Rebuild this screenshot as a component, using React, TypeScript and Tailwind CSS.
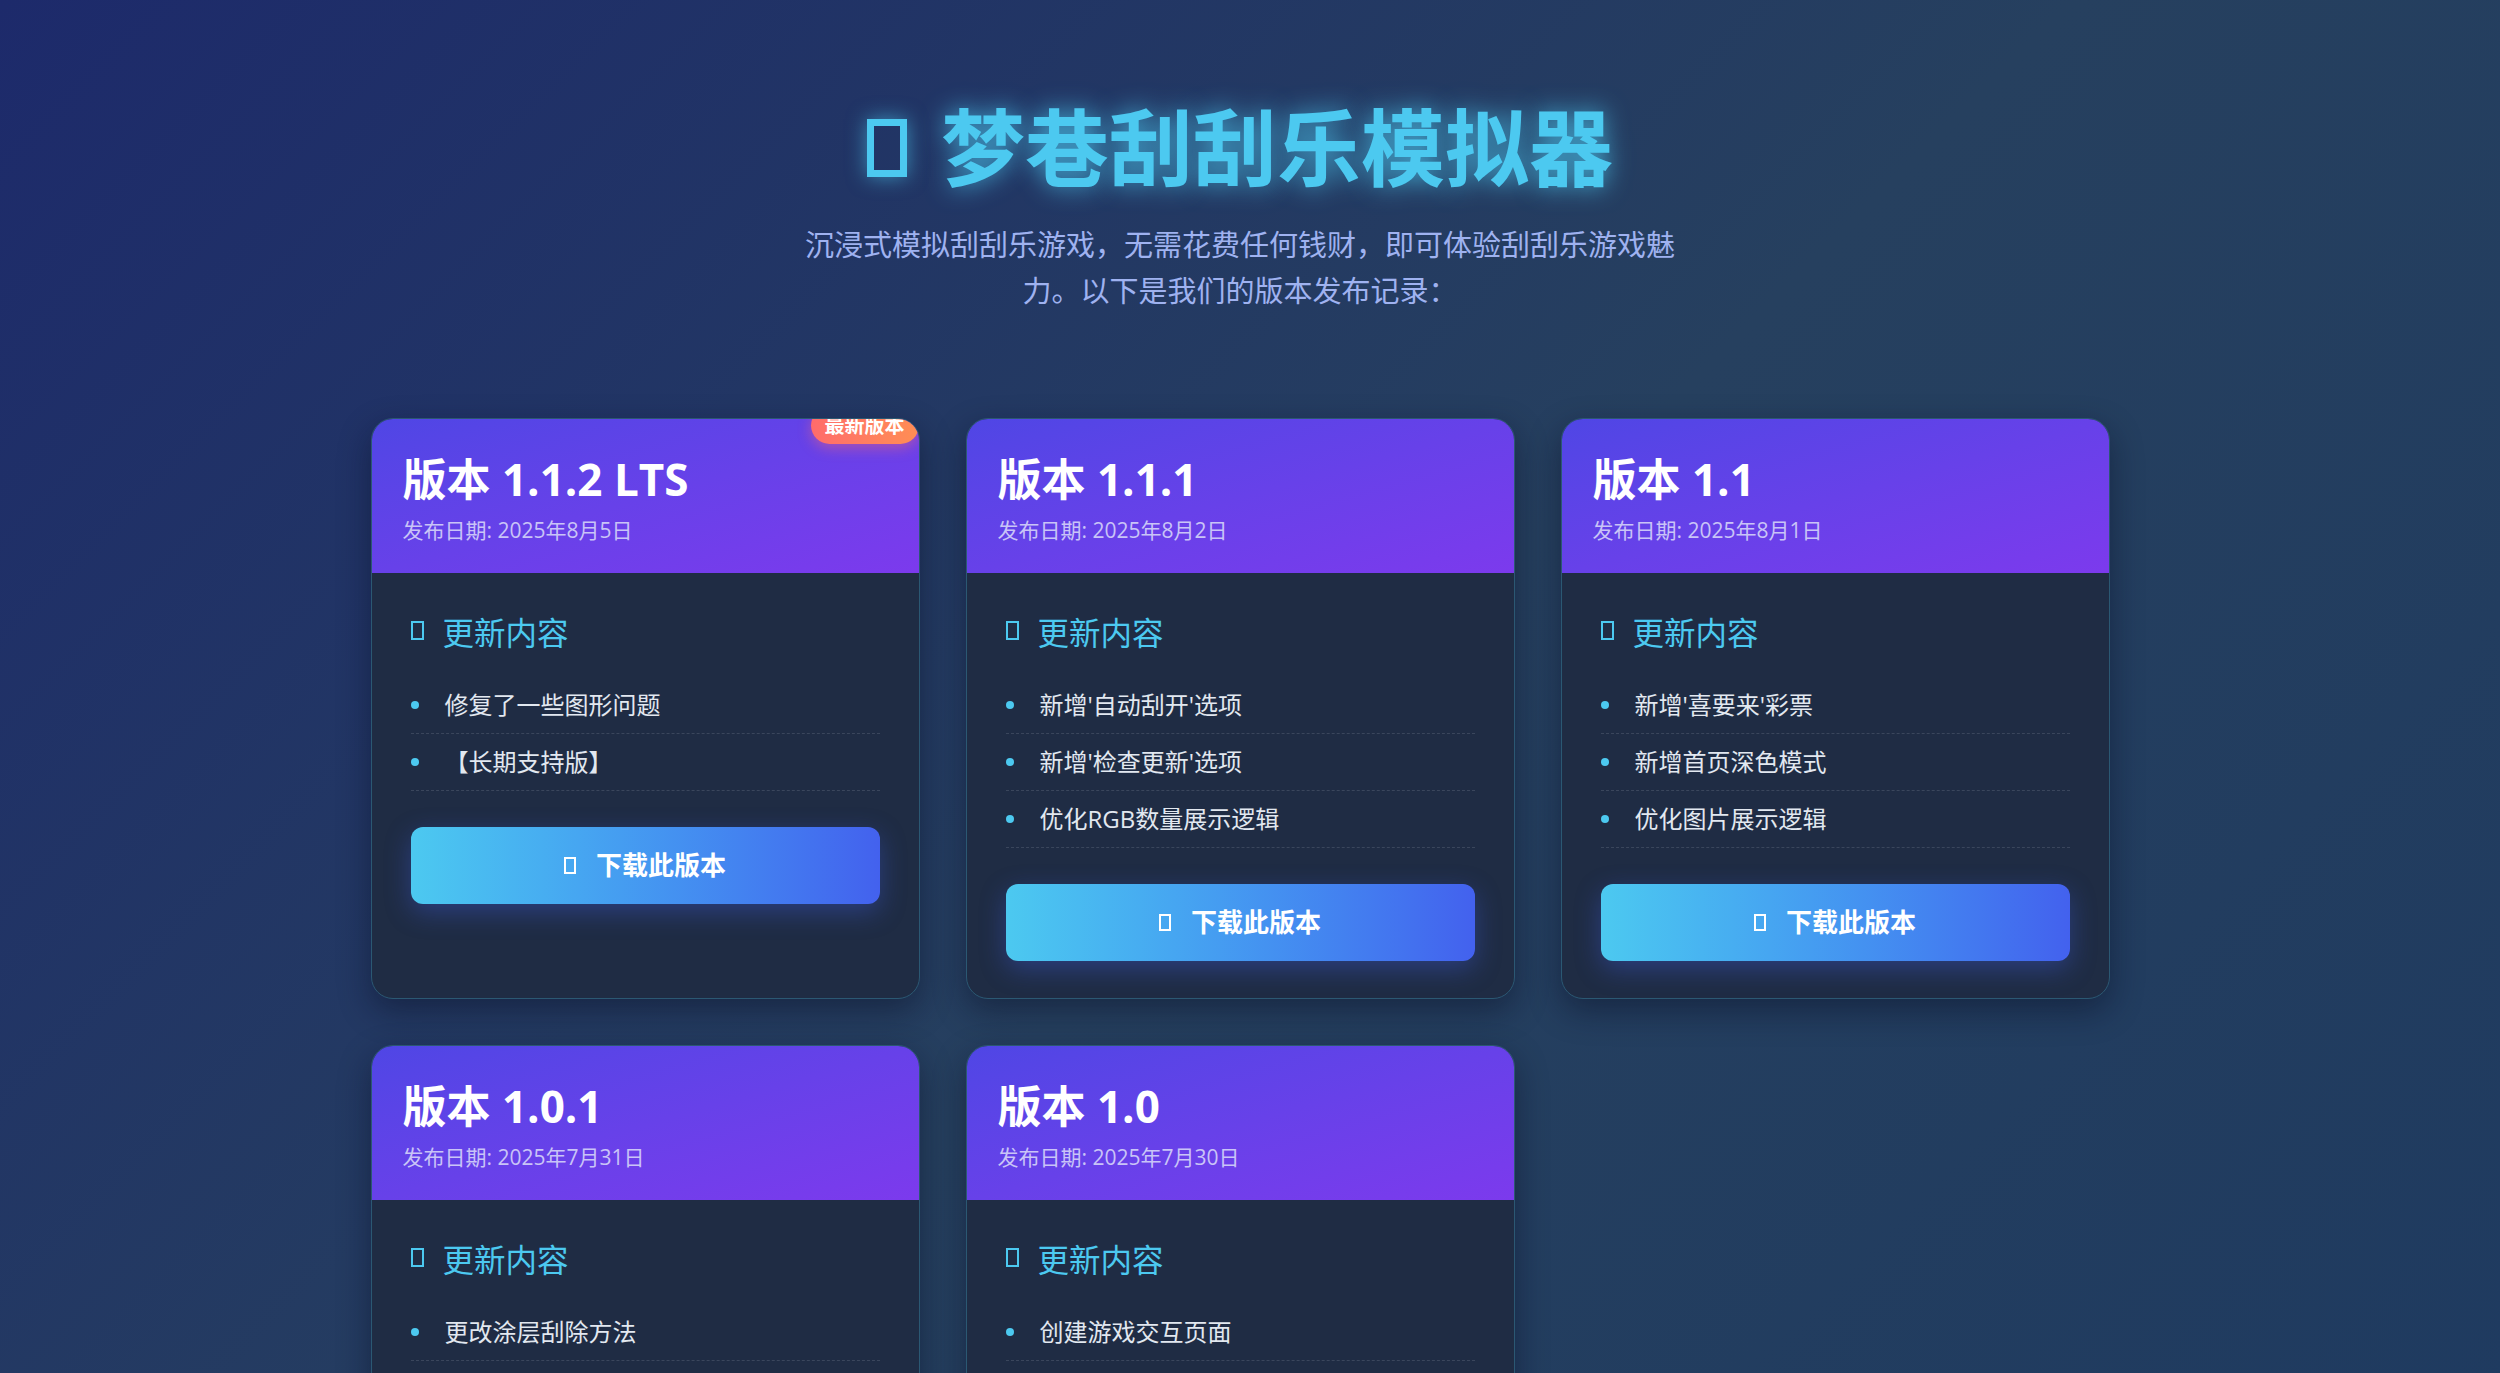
import React from 'react';

interface Release {
  version: string;
  date: string;
  items: string[];
  latest?: boolean;
}

const releases: Release[] = [
  {
    version: '版本 1.1.2 LTS',
    date: '发布日期: 2025年8月5日',
    items: ['修复了一些图形问题', '【长期支持版】'],
    latest: true,
  },
  {
    version: '版本 1.1.1',
    date: '发布日期: 2025年8月2日',
    items: ["新增'自动刮开'选项", "新增'检查更新'选项", '优化RGB数量展示逻辑'],
  },
  {
    version: '版本 1.1',
    date: '发布日期: 2025年8月1日',
    items: ["新增'喜要来'彩票", '新增首页深色模式', '优化图片展示逻辑'],
  },
  {
    version: '版本 1.0.1',
    date: '发布日期: 2025年7月31日',
    items: ['更改涂层刮除方法', '修复刮开进度计算问题'],
  },
  {
    version: '版本 1.0',
    date: '发布日期: 2025年7月30日',
    items: ['创建游戏交互页面', '实现基础刮刮乐玩法'],
  },
];

const ReleaseCard = ({ release }: { release: Release }) => {
  return (
    <div className="relative flex flex-col overflow-hidden rounded-[22px] border border-[#2b5873] bg-[#1f2c44] shadow-[0_12px_32px_rgba(8,14,35,0.45)]">
      {release.latest && (
        <span className="absolute top-[-12px] right-0 rounded-[20px] bg-gradient-to-r from-[#ff6b6b] to-[#ff8e53] px-[14px] py-[8px] text-[20px] leading-[21px] font-bold text-white shadow-[0_4px_14px_rgba(255,107,107,0.45)]">
          最新版本
        </span>
      )}
      {/* Header */}
      <div className="flex flex-col gap-[9px] bg-gradient-to-br from-[#4f46e5] to-[#7c3aed] px-[31px] pt-[33px] pb-[28px]">
        <h2 className="text-[44px] leading-[54px] font-bold text-white">
          {release.version}
        </h2>
        <p className="text-[21px] leading-[30px] text-[#c9c4f7]">
          {release.date}
        </p>
      </div>

      {/* Body */}
      <div className="flex flex-1 flex-col px-[39px] pt-[40px] pb-[37px]">
        <h3 className="mb-[24px] flex items-center gap-[19px] text-[31.5px] leading-[40px] text-[#4cc9f0]">
          <span className="mb-[6px] inline-block h-[19px] w-[13px] border-[2px] border-[#4cc9f0]" />
          更新内容
        </h3>
        <ul className="flex flex-col">
          {release.items.map((item, idx) => (
            <li
              key={idx}
              className="flex items-center gap-[26px] border-b border-dashed border-[#3a465c] py-[16px] text-[24px] leading-[24px] text-[#e2e8f0]"
            >
              <span className="h-[8px] w-[8px] shrink-0 rounded-full bg-[#4cc9f0]" />
              {item}
            </li>
          ))}
        </ul>
        <button className="mt-[36px] flex h-[77px] items-center justify-center gap-[20px] rounded-[12px] bg-gradient-to-r from-[#4cc9f0] to-[#4361ee] text-[26px] font-bold text-white shadow-[0_8px_26px_rgba(67,97,238,0.35)]">
          <span className="inline-block h-[17px] w-[12px] border-[2px] border-white" />
          下载此版本
        </button>
      </div>
    </div>
  );
};

const App = () => {
  return (
    <div
      className="min-h-screen w-full bg-[linear-gradient(135deg,#1d2a6b_0%,#26405f_50%,#1e3a60_100%)] pr-[20px]"
      style={{ fontFamily: '"Open Sans", "Noto Sans CJK SC", sans-serif' }}
    >
      <div className="flex flex-col items-center pt-[100px] pb-[80px]">
        {/* Title */}
        <h1 className="flex items-center gap-[34px] text-[84px] leading-[96px] font-bold text-[#4cc9f0] [text-shadow:0_0_24px_rgba(76,201,240,0.8)]">
          <span className="inline-block h-[58px] w-[40px] border-[7px] border-[#4cc9f0] shadow-[0_0_20px_rgba(76,201,240,0.6)]" />
          梦巷刮刮乐模拟器
        </h1>
        <p className="mt-[26px] max-w-[880px] text-center text-[29px] leading-[46px] text-[#9fb2f0]">
          沉浸式模拟刮刮乐游戏，无需花费任何钱财，即可体验刮刮乐游戏魅力。以下是我们的版本发布记录：
        </p>

        {/* Release grid */}
        <div className="mt-[104px] grid grid-cols-[repeat(3,549px)] gap-[46px]">
          {releases.map((r) => (
            <ReleaseCard key={r.version} release={r} />
          ))}
        </div>
      </div>
    </div>
  );
};

export default App;
